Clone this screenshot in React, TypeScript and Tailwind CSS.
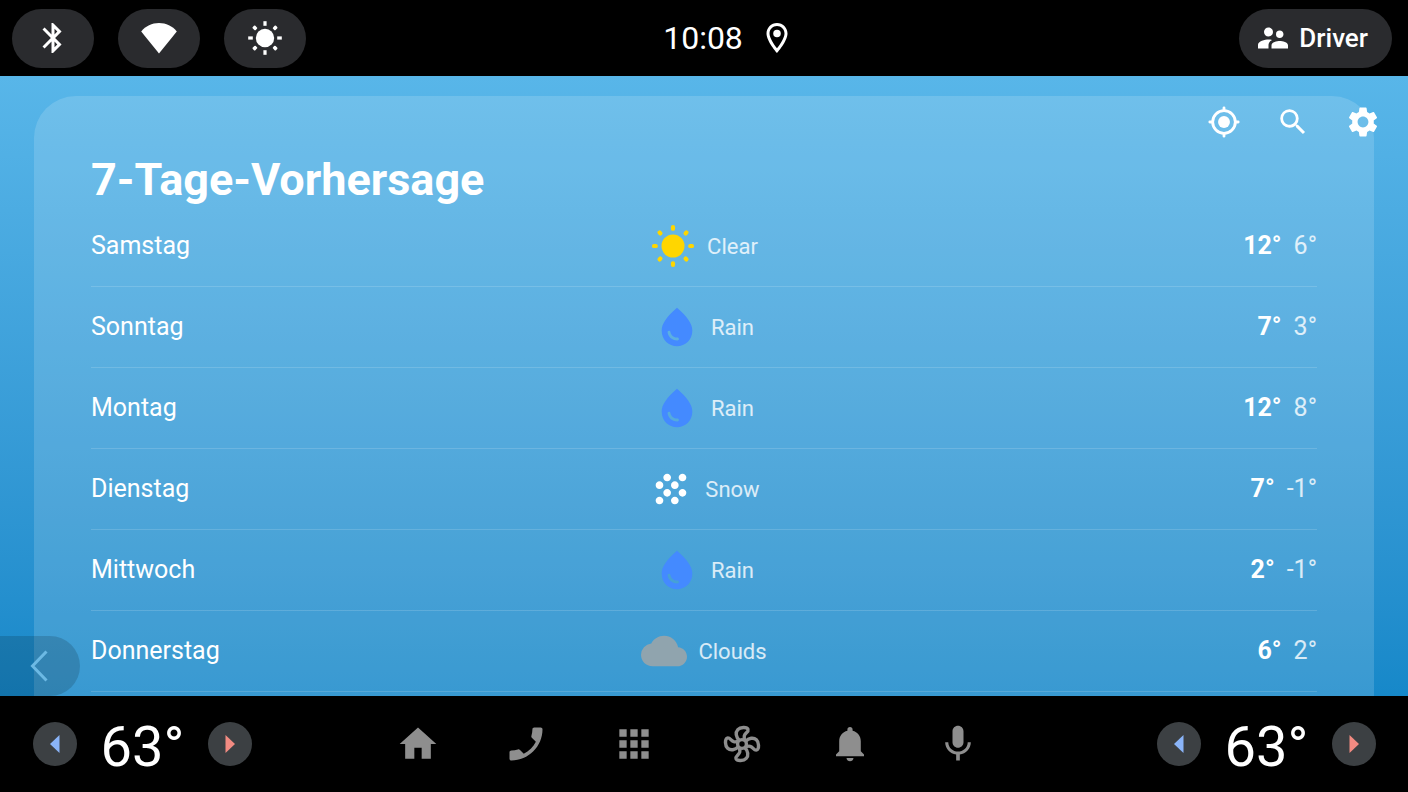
import type { ReactNode } from "react";
import {
  MdApps,
  MdBluetooth,
  MdCloud,
  MdGrain,
  MdHome,
  MdOutlineLocationOn,
  MdPhone,
  MdSearch,
  MdSettings,
  MdSupervisorAccount,
  MdWaterDrop,
} from "react-icons/md";

type Condition = "Clear" | "Rain" | "Snow" | "Clouds";

interface Day {
  name: string;
  condition: Condition;
  high: number;
  low: number;
}

const days: Day[] = [
  { name: "Samstag", condition: "Clear", high: 12, low: 6 },
  { name: "Sonntag", condition: "Rain", high: 7, low: 3 },
  { name: "Montag", condition: "Rain", high: 12, low: 8 },
  { name: "Dienstag", condition: "Snow", high: 7, low: -1 },
  { name: "Mittwoch", condition: "Rain", high: 2, low: -1 },
  { name: "Donnerstag", condition: "Clouds", high: 6, low: 2 },
];

const diagonals = [45, 135, 225, 315];
const quarters = [0, 90, 180, 270];

function WifiIcon() {
  return (
    <svg viewBox="0 0 36 32" className="h-8 w-9" fill="currentColor" aria-hidden="true">
      <path d="M18 31.5 L0.2 9.5 C4.5 4 11 1 18 1 S31.5 4 35.8 9.5 Z" />
    </svg>
  );
}

function BrightnessIcon() {
  return (
    <svg viewBox="-18 -18 36 36" className="size-9" fill="currentColor" aria-hidden="true">
      <circle r="9.2" />
      {quarters.map((a) => (
        <rect key={a} x="-1.6" y="-16.8" width="3.2" height="4.6" transform={`rotate(${a})`} />
      ))}
      {diagonals.map((a) => (
        <rect key={a} x="-1.8" y="-16.4" width="3.6" height="4.2" rx="1" transform={`rotate(${a})`} />
      ))}
    </svg>
  );
}

function SunIcon() {
  return (
    <svg viewBox="-23 -23 46 46" className="size-[46px] text-[#ffd600]" fill="currentColor" aria-hidden="true">
      <circle r="11.5" />
      {quarters.map((a) => (
        <rect key={a} x="-2.1" y="-21" width="4.2" height="5.8" rx="1.9" transform={`rotate(${a})`} />
      ))}
      {diagonals.map((a) => (
        <rect key={a} x="-2.1" y="-21" width="4.2" height="5.2" rx="1.9" transform={`rotate(${a})`} />
      ))}
    </svg>
  );
}

function LocateIcon() {
  return (
    <svg viewBox="0 0 24 24" className="size-[34px]" fill="none" stroke="currentColor" strokeWidth="2" aria-hidden="true">
      <circle cx="12" cy="12" r="8" />
      <circle cx="12" cy="12" r="4.2" fill="currentColor" stroke="none" />
      <path d="M12 2v2M12 20v2M2 12h2M20 12h2" strokeLinecap="round" />
    </svg>
  );
}

function FanIcon() {
  return (
    <svg viewBox="-22 -22 44 44" className="size-11" fill="none" stroke="currentColor" strokeWidth="3.4" aria-hidden="true">
      <circle r="4.4" />
      {quarters.map((a) => (
        <path
          key={a}
          transform={`rotate(${a})`}
          d="M-2.6 -3.6 C-6.2 -6.8 -6.8 -11.6 -4.2 -14.4 C-1.8 -17 5 -17.4 6 -14.6 C6.8 -12 3 -11 2.3 -8.2 C1.9 -6.4 2.3 -5 3 -3.6"
        />
      ))}
    </svg>
  );
}

function BellIcon() {
  return (
    <svg viewBox="-22 -22 44 44" className="size-11" fill="currentColor" aria-hidden="true">
      <path d="M0 -17 C1.6 -17 2.6 -15.9 2.6 -14.3 V-13.2 C7.6 -12 10.8 -8 10.8 -2.8 V7.2 L14 10.4 V12.2 H-14 V10.4 L-10.8 7.2 V-2.8 C-10.8 -8 -7.6 -12 -2.6 -13.2 V-14.3 C-2.6 -15.9 -1.6 -17 0 -17 Z" />
      <path d="M-3.5 13.9 H3.5 C3.2 16 1.8 17.2 0 17.2 S-3.2 16 -3.5 13.9 Z" />
    </svg>
  );
}

function MicIcon() {
  return (
    <svg viewBox="0 0 24 24" className="size-11" fill="currentColor" aria-hidden="true">
      <path d="M12 14c1.66 0 3-1.34 3-3V5c0-1.66-1.34-3-3-3S9 3.34 9 5v6c0 1.66 1.34 3 3 3zm5.3-3c0 3-2.54 5.1-5.3 5.1S6.7 14 6.7 11H5c0 3.41 2.72 6.23 6 6.72V21h2v-3.28c3.28-.48 6-3.3 6-6.72h-1.7z" />
    </svg>
  );
}

const conditionIcons: Record<Condition, ReactNode> = {
  Clear: <SunIcon />,
  Rain: <MdWaterDrop className="size-[46px] text-[#448aff]" aria-hidden="true" />,
  Snow: <MdGrain className="size-[46px] text-white" aria-hidden="true" />,
  Clouds: <MdCloud className="size-[46px] text-[#90a4ae]" aria-hidden="true" />,
};

function StatusPill({ label, children }: { label: string; children: ReactNode }) {
  return (
    <button
      type="button"
      aria-label={label}
      className="flex h-[59px] w-[82px] items-center justify-center rounded-[30px] bg-[#2a2b2e]"
    >
      {children}
    </button>
  );
}

function StatusBar() {
  return (
    <header className="grid h-[76px] shrink-0 grid-cols-[1fr_auto_1fr] items-center bg-black pr-4 pl-3">
      <div className="flex gap-6">
        <StatusPill label="Bluetooth">
          <MdBluetooth className="size-9" />
        </StatusPill>
        <StatusPill label="WLAN">
          <WifiIcon />
        </StatusPill>
        <StatusPill label="Helligkeit">
          <BrightnessIcon />
        </StatusPill>
      </div>
      <div className="flex items-center gap-4 pl-[54px]">
        <time className="text-[32px] leading-10">10:08</time>
        <MdOutlineLocationOn className="size-9" aria-hidden="true" />
      </div>
      <button
        type="button"
        className="flex h-[59px] items-center gap-2 justify-self-end rounded-[30px] bg-[#2a2b2e] pr-6 pl-4 text-[26px] font-medium"
      >
        <MdSupervisorAccount className="size-9" aria-hidden="true" />
        Driver
      </button>
    </header>
  );
}

function Forecast() {
  return (
    <section className="mx-[34px] min-h-full rounded-t-[42px] bg-white/15 px-[57px] pt-14">
      <h1 className="h-[54px] text-[45px] leading-[56px] font-bold">7-Tage-Vorhersage</h1>
      <table className="w-full table-fixed border-separate border-spacing-0 text-[25px]">
        <tbody>
          {days.map((day) => (
            <tr key={day.name} className="h-[81px]">
              <th scope="row" className="border-b border-white/15 p-0 text-left font-normal">
                {day.name}
              </th>
              <td className="border-b border-white/15 p-0">
                <div className="flex items-center justify-center gap-[11px] text-[22px] text-white/80">
                  {conditionIcons[day.condition]}
                  {day.condition}
                </div>
              </td>
              <td className="border-b border-white/15 p-0">
                <div className="flex justify-end gap-3">
                  <span className="font-bold">{day.high}°</span>
                  <span className="text-white/80">{day.low}°</span>
                </div>
              </td>
            </tr>
          ))}
        </tbody>
      </table>
    </section>
  );
}

function ClimateControl({ side }: { side: string }) {
  return (
    <div role="group" aria-label={side} className="flex w-[219px] items-center justify-between">
      <button type="button" aria-label="Kälter" className="flex size-11 items-center justify-center rounded-full bg-[#3c4043]">
        <svg viewBox="0 0 10 18" className="h-[18px] w-2.5 text-[#8ab4f8]" fill="currentColor" aria-hidden="true">
          <path d="M9.5 0v18L0 9z" />
        </svg>
      </button>
      <output className="pt-1.5 text-[56px] leading-[68px]">63°</output>
      <button type="button" aria-label="Wärmer" className="flex size-11 items-center justify-center rounded-full bg-[#3c4043]">
        <svg viewBox="0 0 10 18" className="h-[18px] w-2.5 text-[#f28b82]" fill="currentColor" aria-hidden="true">
          <path d="M0.5 0v18L10 9z" />
        </svg>
      </button>
    </div>
  );
}

const navItems: { label: string; icon: ReactNode }[] = [
  { label: "Startseite", icon: <MdHome className="size-11" /> },
  { label: "Telefon", icon: <MdPhone className="size-11 -scale-x-100" /> },
  { label: "Apps", icon: <MdApps className="size-11" /> },
  { label: "Klima", icon: <FanIcon /> },
  { label: "Mitteilungen", icon: <BellIcon /> },
  { label: "Sprachassistent", icon: <MicIcon /> },
];

export default function App() {
  return (
    <div className="flex h-screen flex-col overflow-hidden bg-black font-[Roboto,sans-serif] text-white">
      <StatusBar />
      <main className="relative min-h-0 flex-1 overflow-hidden bg-linear-to-b from-[#58b6e9] to-[#1688c9] pt-5">
        <Forecast />
        <div className="absolute top-7 right-[27px] flex items-center gap-[35px]">
          <button type="button" aria-label="Mein Standort">
            <LocateIcon />
          </button>
          <button type="button" aria-label="Suchen">
            <MdSearch className="size-[34px]" />
          </button>
          <button type="button" aria-label="Einstellungen">
            <MdSettings className="size-9" />
          </button>
        </div>
        <button
          type="button"
          aria-label="Zurück"
          className="absolute bottom-0 left-0 flex h-[60px] w-20 items-center justify-center rounded-r-[30px] bg-black/15"
        >
          <svg viewBox="0 0 20 32" className="h-8 w-5 text-[#6cb9e4]" fill="none" stroke="currentColor" strokeWidth="3" aria-hidden="true">
            <path d="M16.5 1.5 2.5 16 16.5 30.5" />
          </svg>
        </button>
      </main>
      <footer className="flex h-24 shrink-0 items-center justify-between bg-black pr-8 pl-[33px]">
        <ClimateControl side="Fahrerseite" />
        <nav className="flex gap-16 pr-[34px] text-[#8e8e8e]">
          {navItems.map((item) => (
            <button key={item.label} type="button" aria-label={item.label}>
              {item.icon}
            </button>
          ))}
        </nav>
        <ClimateControl side="Beifahrerseite" />
      </footer>
    </div>
  );
}
